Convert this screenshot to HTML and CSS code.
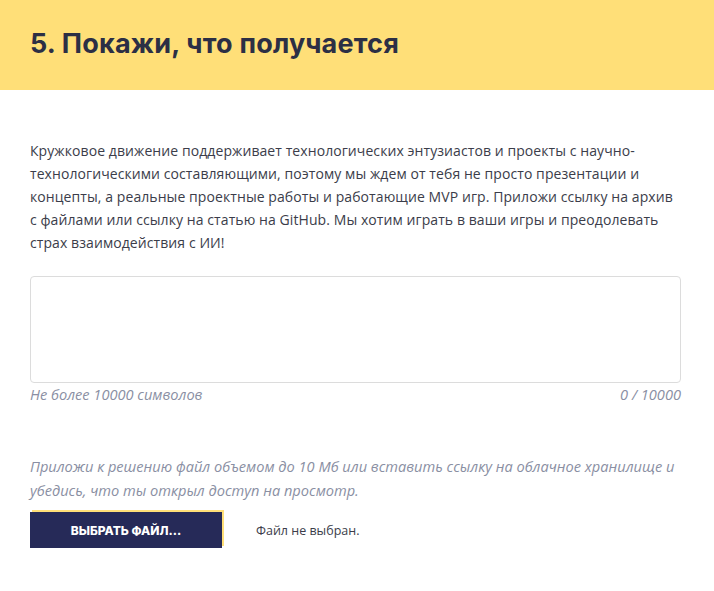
FILE: index.html
```html
<!DOCTYPE html>
<html lang="ru">
<head>
<meta charset="utf-8">
<link rel="stylesheet" href="styles.css">
</head>
<body>
<header class="head">
  <h2 class="title">5. Покажи, что получается</h2>
</header>
<main class="content">
  <p class="lead">Кружковое движение поддерживает технологических энтузиастов и проекты с научно-технологическими составляющими, поэтому мы ждем от тебя не просто презентации и концепты, а реальные проектные работы и работающие MVP игр. Приложи ссылку на архив с файлами или ссылку на статью на GitHub. Мы хотим играть в ваши игры и преодолевать страх взаимодействия с ИИ!</p>
  <div class="field">
    <textarea class="area"></textarea>
    <div class="hint"><span>Не более 10000 символов</span><span>0 / 10000</span></div>
  </div>
  <p class="note">Приложи к решению файл объемом до 10 Мб или вставить ссылку на облачное хранилище и убедись, что ты открыл доступ на просмотр.</p>
  <div class="file">
    <button class="btn">ВЫБРАТЬ ФАЙЛ...</button>
    <span class="status">Файл не выбран.</span>
  </div>
</main>
</body>
</html>
```
FILE: styles.css
```css
* { box-sizing: border-box; }
html, body { margin: 0; padding: 0; background: #fff; }
body { font-family: "Open Sans", "Noto Sans", sans-serif; color: #3b3d4a; }
.head {
  background: #ffdf78;
  height: 90px;
  padding: 0 30px 3px;
  display: flex;
  align-items: center;
}
.title {
  margin: 0;
  font-family: "Inter", sans-serif;
  font-weight: 700;
  font-size: 27px;
  color: #2c2f45;
  letter-spacing: 0.2px;
}
.content { padding: 49px 33px 0 30px; }
.lead {
  margin: 0;
  font-size: 14px;
  line-height: 23px;
  letter-spacing: 0.08px;
  color: #3b3d4a;
}
.field { margin-top: 22px; }
.area {
  display: block;
  width: 100%;
  height: 107px;
  border: 1px solid #dcdcdc;
  border-radius: 4px;
  resize: none;
  margin: 0;
}
.hint {
  display: flex;
  justify-content: space-between;
  font-style: italic;
  font-size: 14.6px;
  color: #8a8fa3;
  margin-top: 1px;
  line-height: 20px;
}
.note {
  margin: 50px 0 0;
  font-style: italic;
  font-size: 14.6px;
  line-height: 24px;
  color: #8a8fa3;
}
.file {
  margin-top: 10px;
  display: flex;
  align-items: center;
}
.btn {
  width: 192px;
  height: 36px;
  background: #262a58;
  color: #fff;
  border: 0;
  font-family: "Inter", sans-serif;
  font-weight: 800;
  font-size: 12px;
  box-shadow: 2px -2px 0 #ffdf78;
  padding: 0;
}
.status {
  margin-left: 34px;
  font-size: 12.5px;
  color: #3b3d4a;
}
```
